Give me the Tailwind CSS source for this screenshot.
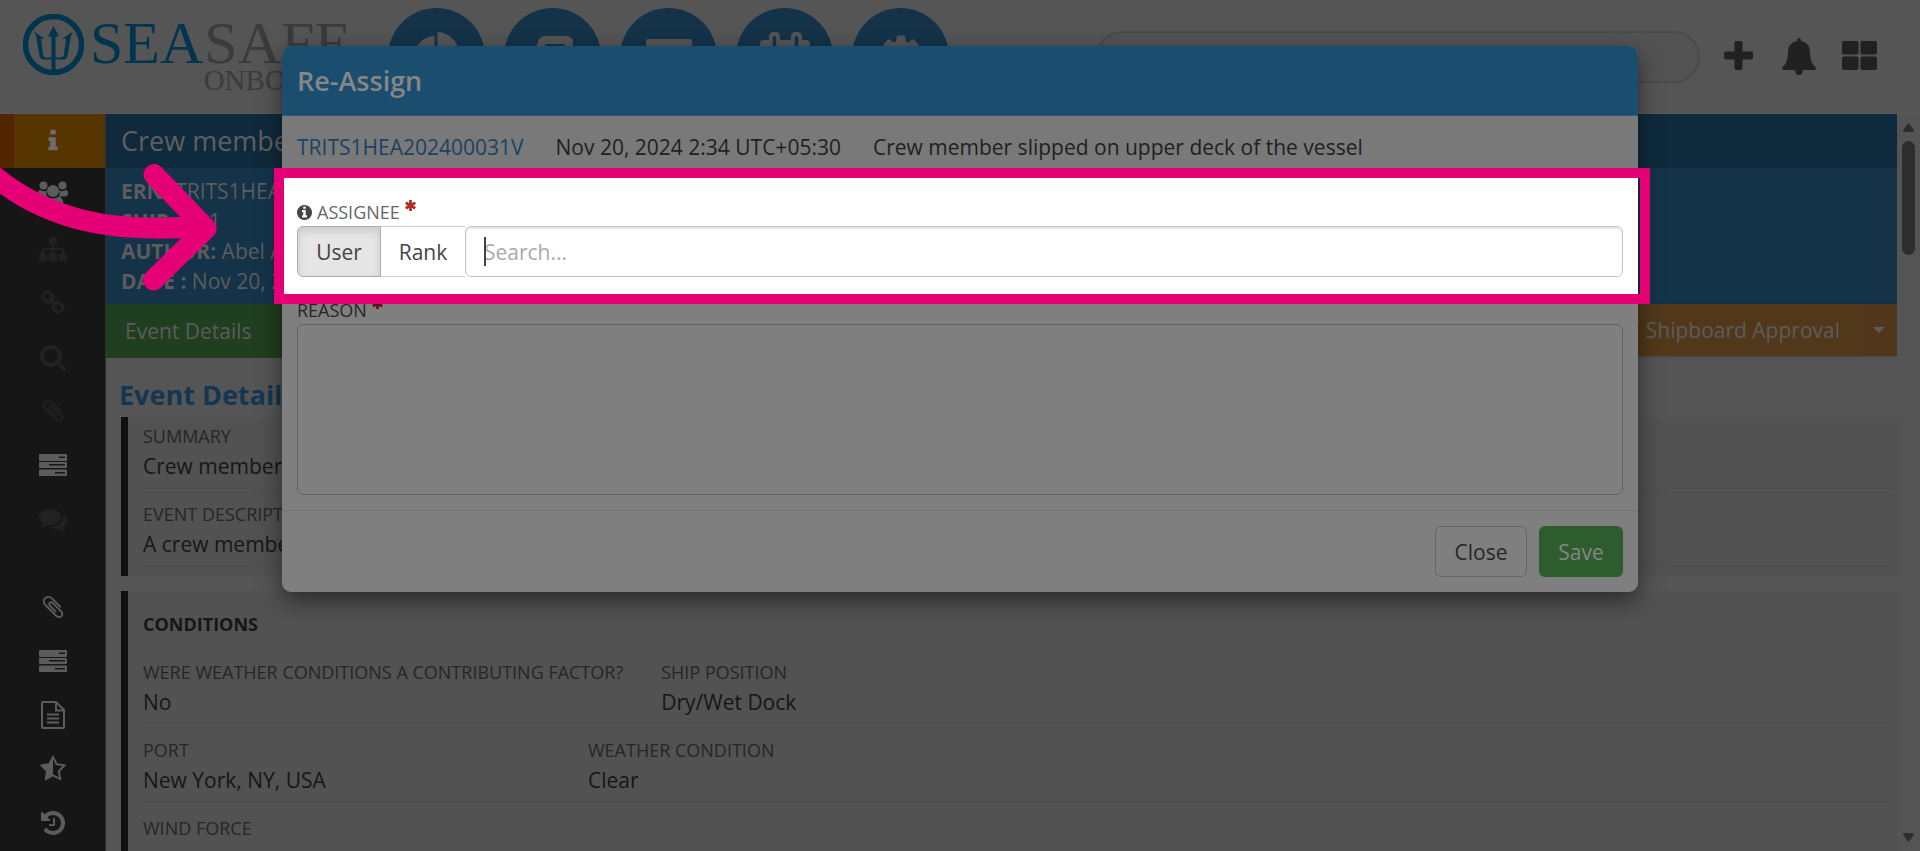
<!DOCTYPE html>
<html lang="en">
<head>
<meta charset="utf-8">
<title>SeaSafe Onboard - Re-Assign</title>
<script src="https://cdn.jsdelivr.net/npm/@tailwindcss/browser@4"></script>
</head>
<body class="relative flex h-screen flex-col overflow-hidden bg-[#555555] font-['Open_Sans',sans-serif] text-[21px] leading-[30px] text-[#161616]">

<svg class="hidden">
  <symbol id="clip" viewBox="0 0 1792 1792"><path d="M1596 1385q0 117-79 196t-196 79q-135 0-235-100l-777-776q-113-115-113-271 0-159 110-270t269-111q158 0 273 113l605 606q10 10 10 22 0 16-30.500 46.500t-46.500 30.500q-13 0-23-10l-606-607q-79-77-181-77-106 0-179 75t-73 181q0 105 76 181l776 777q63 63 145 63 64 0 106-42t42-106q0-82-63-145l-581-581q-26-24-60-24-29 0-48 19t-19 48q0 32 25 59l410 410q10 10 10 22 0 16-31 47t-47 31q-12 0-22-10l-410-410q-63-61-63-149 0-82 57-139t139-57q88 0 149 63l581 581q100 98 100 235z"/></symbol>
  <symbol id="tasks" viewBox="0 0 28 28"><path fill-rule="evenodd" d="M1 3h26a1 1 0 0 1 1 1v5a1 1 0 0 1-1 1H1a1 1 0 0 1-1-1V4a1 1 0 0 1 1-1zM20 5.500v1.500h6V5.500zM1 11h26a1 1 0 0 1 1 1v4a1 1 0 0 1-1 1H1a1 1 0 0 1-1-1v-4a1 1 0 0 1 1-1zM10 13v1.500h16V13zM1 18.500h26a1 1 0 0 1 1 1v4.500a1 1 0 0 1-1 1H1a1 1 0 0 1-1-1v-4.500a1 1 0 0 1 1-1zM16 21v1.500h10V21z"/></symbol>
  <symbol id="star" viewBox="0 0 12 12"><path d="M6 0v12M.8 3l10.400 6M.8 9l10.400-6" fill="none" stroke="currentColor" stroke-width="3"/></symbol>
</svg>

<header class="flex h-[114px] shrink-0 items-start border-b border-[#5b5b5b]">
  <a href="#" aria-label="SeaSafe Onboard" class="ml-[23px] mt-[14px] flex w-[365px] items-start font-['Liberation_Serif',serif]">
    <svg class="size-[61px] shrink-0 text-[#00354d]" viewBox="0 0 61 61" fill="currentColor">
      <circle cx="30.500" cy="30.500" r="28" fill="none" stroke="currentColor" stroke-width="5.500"/>
      <path d="M30.500 12l5.500 10.500h-3.500V43.500h5.500q2.500 0 3-3.500l2-15.500-4 .5 11-7.500-2 4-3.500 20q-.8 4-4 4h-8v11h-4V45.500h-8q-3.200 0-4-4l-3.500-20-2-4 11 7.500-4-.5 2 15.500q.5 3.500 3 3.500h5.500V22.500H25z"/>
    </svg>
    <span class="ml-[6px] mt-[2px] flex flex-col">
      <span class="flex gap-px text-[60px] leading-[55px] text-[#3b3b3b]"><span class="text-[#00354d]">SEA</span><span>SAFE</span></span>
      <span class="self-end pr-1 text-[29px] leading-[18px] text-[#3b3b3b]">ONBOARD</span>
    </span>
  </a>
  <nav class="mt-2 flex gap-[19px] text-[#555555]" aria-label="Main">
    <button aria-label="Dashboard" class="flex size-[97px] items-center justify-center rounded-full bg-[#143349]">
      <svg class="size-[50px]" viewBox="0 0 50 50" fill="currentColor"><path d="M22.500 4v23l16 15A22 22 0 1 1 22.500 4z"/><path d="M25.500 0a23 23 0 0 1 22 23h-22z"/></svg>
    </button>
    <button aria-label="Records" class="flex size-[97px] items-center justify-center rounded-full bg-[#143349]">
      <svg class="size-[50px]" viewBox="0 0 50 50" fill="none" stroke="currentColor" stroke-width="8"><path d="M17 8h21q4 0 3 4l-7 25q-1 4-5 4H9q-4 0-3-4l8-27q1-2 3-2z"/><path d="M46 15q2 1 1 5l-6 20q-1 5-6 5H9" stroke-width="3"/></svg>
    </button>
    <button aria-label="Forms" class="flex size-[97px] items-center justify-center rounded-full bg-[#143349]">
      <svg class="size-[50px]" viewBox="0 0 50 50" fill="currentColor"><path fill-rule="evenodd" d="M4 7h42q2 0 2 2v32q0 2-2 2H4q-2 0-2-2V9q0-2 2-2zM7 18v20h36V18z"/></svg>
    </button>
    <button aria-label="Calendar" class="flex size-[97px] items-center justify-center rounded-full bg-[#143349]">
      <svg class="size-[50px]" viewBox="0 0 50 50" fill="currentColor"><path fill-rule="evenodd" d="M4 8h5V5q0-5 5-5h1q5 0 5 5v3h11V5q0-5 5-5h1q5 0 5 5v3h4q4 0 4 4v34q0 4-4 4H4q-4 0-4-4V12q0-4 4-4zM4 20v26h42V20z"/><path d="M14.500 5.500v10M36.500 5.500v10" stroke="#143349" stroke-width="3.500" stroke-linecap="round"/></svg>
    </button>
    <button aria-label="Settings" class="flex size-[97px] items-center justify-center rounded-full bg-[#143349]">
      <svg class="size-[50px]" viewBox="0 0 1792 1792" fill="currentColor"><path d="M1152 896q0-106-75-181t-181-75-181 75-75 181 75 181 181 75 181-75 75-181zm512-109v222q0 12-8 23t-20 13l-185 28q-19 54-39 91 35 50 107 138 10 12 10 25t-9 23q-27 37-99 108t-94 71q-12 0-26-9l-138-108q-44 23-91 38-16 136-29 186-7 28-36 28h-222q-14 0-24.500-8.500t-11.500-21.500l-28-184q-49-16-90-37l-141 107q-10 9-25 9-14 0-25-11-126-114-165-168-7-10-7-23 0-12 8-23 15-21 51-66.500t54-70.500q-27-50-41-99l-183-27q-13-2-21-12.500t-8-23.500v-222q0-12 8-23t19-13l186-28q14-46 39-92-40-57-107-138-10-12-10-24 0-10 9-23 26-36 98.500-107.500t94.500-71.500q13 0 26 10l138 107q44-23 91-38 16-136 29-186 7-28 36-28h222q14 0 24.500 8.500t11.500 21.500l28 184q49 16 90 37l142-107q9-9 24-9 13 0 25 10 129 119 165 170 7 8 7 22 0 12-8 23-15 21-51 66.500t-54 70.500q26 50 41 98l183 28q13 2 21 12.500t8 23.500z"/></svg>
    </button>
  </nav>
  <input type="search" aria-label="Search records" class="ml-auto mt-[31px] h-[52px] w-[604px] rounded-full border-2 border-[#4b4b4b] bg-[#535353] px-6">
  <div class="ml-6 mr-[43px] mt-[38px] flex h-[37px] text-[#212121]">
    <button aria-label="Add" class="mt-[3px] h-[29px]"><svg class="size-[29px]" viewBox="0 0 29 29" fill="currentColor"><path d="M12.500 0h4q2 0 2 2v8.500H27q2 0 2 2v4q0 2-2 2h-8.500V27q0 2-2 2h-4q-2 0-2-2v-8.500H2q-2 0-2-2v-4q0-2 2-2h8.500V2q0-2 2-2z"/></svg></button>
    <button aria-label="Notifications" class="ml-[29px]"><svg class="h-[37px] w-[34px]" viewBox="0 0 34 37" fill="currentColor"><path d="M17 0q2 0 2 3 8.500 1.500 9 11 .3 9 3 12.500l3 3.500q0 2-2 2H21q-.5 5-4 5t-4-5H2q-2 0-2-2l3-3.500Q5.700 23 6 14q.5-9.500 9-11 0-3 2-3z"/></svg></button>
    <button aria-label="Apps" class="ml-[26px] mt-[3px] h-[29px]"><svg class="h-[29px] w-[35px]" viewBox="0 0 35 29" fill="currentColor"><rect width="16.500" height="13.500" rx="2"/><rect x="18.500" width="16.500" height="13.500" rx="2"/><rect y="15.500" width="16.500" height="13.500" rx="2"/><rect x="18.500" y="15.500" width="16.500" height="13.500" rx="2"/></svg></button>
  </div>
</header>

<div class="flex min-h-0 flex-1">
  <nav aria-label="Sections" class="flex w-[106px] shrink-0 flex-col border-r border-[#2e2e2e] bg-[#161616] text-[#5c5c5c]">
    <a href="#" aria-label="Info" class="flex h-[54px] shrink-0 items-center justify-center border-l-[14px] border-[#522400] bg-[#573500] pr-[14px] text-[#6d6d6d]"><svg class="size-[26px]" viewBox="0 0 1792 1792" fill="currentColor"><path d="M1216 1344v128q0 26-19 45t-45 19h-512q-26 0-45-19t-19-45v-128q0-26 19-45t45-19h64v-384h-64q-26 0-45-19t-19-45v-128q0-26 19-45t45-19h384q26 0 45 19t19 45v576h64q26 0 45 19t19 45zm-128-1152v192q0 26-19 45t-45 19h-256q-26 0-45-19t-19-45v-192q0-26 19-45t45-19h256q26 0 45 19t19 45z"/></svg></a>
    <a href="#" aria-label="People" class="flex h-[54px] shrink-0 items-center justify-center"><svg class="h-7 w-[30px]" viewBox="0 0 30 28" fill="currentColor"><circle cx="5.500" cy="4.500" r="4"/><circle cx="24.500" cy="4.500" r="4"/><path d="M2 9q3.500 2 7 .5-1.500 3 .5 6H3q-3 0-3-3Q0 9 2 9zM28 9q-3.500 2-7 .5 1.500 3-.5 6H27q3 0 3-3Q30 9 28 9z"/><circle cx="15" cy="10" r="6"/><path d="M9 15.500q6 4 12 0 4.500 1 4.500 8.500 0 3-4 3h-13q-4 0-4-3 0-7.500 4.500-8.500z"/></svg></a>
    <a href="#" aria-label="Hierarchy" class="flex h-[54px] shrink-0 items-center justify-center text-[#222222]"><svg class="size-7" viewBox="0 0 1792 1792" fill="currentColor"><path d="M1792 1248v320q0 40-28 68t-68 28h-320q-40 0-68-28t-28-68v-320q0-40 28-68t68-28h96v-192h-512v192h96q40 0 68 28t28 68v320q0 40-28 68t-68 28h-320q-40 0-68-28t-28-68v-320q0-40 28-68t68-28h96v-192h-512v192h96q40 0 68 28t28 68v320q0 40-28 68t-68 28h-320q-40 0-68-28t-28-68v-320q0-40 28-68t68-28h96v-192q0-52 38-90t90-38h512v-192h-96q-40 0-68-28t-28-68v-320q0-40 28-68t68-28h320q40 0 68 28t28 68v320q0 40-28 68t-68 28h-96v192h512q52 0 90 38t38 90v192h96q40 0 68 28t28 68z"/></svg></a>
    <a href="#" aria-label="Links" class="flex h-[54px] shrink-0 items-center justify-center text-[#222222]"><svg class="size-[26px]" viewBox="0 0 1792 1792" fill="currentColor"><path d="M1520 1216q0-40-28-68l-208-208q-28-28-68-28-42 0-72 32 3 3 19 18.500t21.500 21.500 15 19 13 25.500 3.500 27.500q0 40-28 68t-68 28q-15 0-27.500-3.500t-25.500-13-19-15-21.500-21.500-18.500-19q-33 31-33 73 0 40 28 68l206 207q27 27 68 27 40 0 68-26l147-146q28-28 28-67zm-703-705q0-40-28-68l-206-207q-28-28-68-28-39 0-68 27l-147 146q-28 28-28 67 0 40 28 68l208 208q27 27 68 27 42 0 72-31-3-3-19-18.500t-21.500-21.500-15-19-13-25.500-3.500-27.500q0-40 28-68t68-28q15 0 27.500 3.500t25.500 13 19 15 21.500 21.500 18.500 19q33-31 33-73zm895 705q0 120-85 203l-147 146q-83 83-203 83-121 0-204-85l-206-207q-83-83-83-203 0-123 88-209l-88-88q-86 88-208 88-120 0-204-84l-208-208q-84-84-84-204t85-203l147-146q83-83 203-83 121 0 204 85l206 207q83 83 83 203 0 123-88 209l88 88q86-88 208-88 120 0 204 84l208 208q84 84 84 204z"/></svg></a>
    <a href="#" aria-label="Search" class="flex h-[54px] shrink-0 items-center justify-center text-[#222222]"><svg class="size-7" viewBox="0 0 1792 1792" fill="currentColor"><path d="M1216 832q0-185-131.500-316.500t-316.500-131.500-316.500 131.500-131.500 316.500 131.500 316.500 316.500 131.500 316.500-131.500 131.500-316.500zm512 832q0 52-38 90t-90 38q-54 0-90-38l-343-342q-179 124-399 124-143 0-273.500-55.500t-225-150-150-225-55.500-273.500 55.500-273.500 150-225 225-150 273.500-55.500 273.500 55.500 225 150 150 225 55.500 273.500q0 220-124 399l343 343q37 37 37 90z"/></svg></a>
    <a href="#" aria-label="Attachments" class="flex h-[54px] shrink-0 items-center justify-center text-[#222222]"><svg class="size-[26px]" fill="currentColor"><use href="#clip"/></svg></a>
    <a href="#" aria-label="Tasks" class="flex h-[54px] shrink-0 items-center justify-center"><svg class="size-7" fill="currentColor"><use href="#tasks"/></svg></a>
    <a href="#" aria-label="Comments" class="flex h-[54px] shrink-0 items-center justify-center text-[#222222]"><svg class="size-7" viewBox="0 0 1792 1792" fill="currentColor"><path d="M1408 768q0 139-94 257t-256.500 186.500-353.500 68.500q-86 0-176-16-124 88-278 128-36 9-86 16h-3q-11 0-20.500-8t-11.500-21q-1-3-1-6.500t.5-6.500 2-6l2.500-5 3.500-5.500 4-5 4.500-5 4-4.500q5-6 23-25t26-29.500 22.500-29 25-38.500 20.500-44q-124-72-195-177t-71-224q0-139 94-257t256.500-186.500 353.500-68.500 353.500 68.500 256.500 186.500 94 257zm384 256q0 120-71 224.500t-195 176.500q10 24 20.500 44t25 38.500 22.500 29 26 29.500 23 25q1 1 4 4.500t4.500 5 4 5 3.500 5.500l2.500 5 2 6 .5 6.500-1 6.500q-3 14-13 22t-22 7q-50-7-86-16-154-40-278-128-90 16-176 16-271 0-472-132 58 4 88 4 161 0 309-45t264-129q125-92 192-212t67-254q0-77-23-152 129 71 204 178t75 230z"/></svg></a>
    <a href="#" aria-label="Files" class="mt-[34px] flex h-[54px] shrink-0 items-center justify-center"><svg class="size-[26px]" fill="currentColor"><use href="#clip"/></svg></a>
    <a href="#" aria-label="Actions" class="flex h-[54px] shrink-0 items-center justify-center"><svg class="size-7" fill="currentColor"><use href="#tasks"/></svg></a>
    <a href="#" aria-label="Report" class="flex h-[54px] shrink-0 items-center justify-center"><svg class="h-7 w-6" viewBox="0 0 24 28" fill="none" stroke="currentColor" stroke-width="2"><path d="M2 1h13l8 8v17q0 1-1 1H2q-1 0-1-1V2q0-1 1-1zM15 1v8.500h8M6 13.500h12M6 17.500h12M6 21.500h12"/></svg></a>
    <a href="#" aria-label="Rating" class="flex h-[54px] shrink-0 items-center justify-center"><svg class="size-7" viewBox="0 0 1792 1792" fill="currentColor"><path d="M1250 957l257-250-356-52-66-10-30-60-159-322v963l59 31 318 168-60-355-12-66zm452-262l-363 354 86 500q5 33-6 51.500t-34 18.500q-17 0-40-12l-449-236-449 236q-23 12-40 12-23 0-34-18.500t-6-51.500l86-500-364-354q-32-32-23-59.500t54-34.500l502-73 225-455q20-41 49-41 28 0 49 41l225 455 502 73q45 7 54 34.500t-24 59.500z"/></svg></a>
    <a href="#" aria-label="History" class="flex h-[54px] shrink-0 items-center justify-center"><svg class="size-7" viewBox="0 0 1792 1792" fill="currentColor"><path d="M1664 896q0 156-61 298t-164 245-245 164-298 61q-172 0-327-72.500t-264-204.500q-7-10-6.500-22.500t8.500-20.500l137-138q10-9 25-9 16 2 23 12 73 95 179 147t225 52q104 0 198.500-40.500t163.500-109.500 109.500-163.500 40.500-198.500-40.500-198.500-109.500-163.500-163.500-109.500-198.500-40.500q-98 0-188 35.500t-160 101.500l137 138q31 30 14 69-17 40-59 40h-448q-26 0-45-19t-19-45v-448q0-42 40-59 39-17 69 14l130 129q107-101 244.500-156.500t284.500-55.500 298 61 245 164 164 245 61 298zm-640-288v448q0 14-9 23t-23 9h-320q-14 0-23-9t-9-23v-64q0-14 9-23t23-9h224v-352q0-14 9-23t23-9h64q14 0 23 9t9 23z"/></svg></a>
  </nav>

  <main class="flex min-w-0 flex-1 flex-col overflow-hidden">
    <h1 class="h-[54px] shrink-0 bg-[#0f2a3c] px-[15px] text-[27px] leading-[53px] text-[#5f5f5f]">Crew member slipped on upper deck of the vessel</h1>
    <div class="flex h-[136px] shrink-0 flex-col bg-[#143349] px-[15px] pt-2 text-[#5c5c5c]">
      <p><b>ERN:</b> TRITS1HEA202400031V</p>
      <p><b>SHIP:</b> TS 1</p>
      <p><b>AUTHOR:</b> Abel A</p>
      <p><b>DATE :</b> Nov 20, 2024</p>
    </div>
    <div class="flex shrink-0 items-start justify-between text-[#5c5c5c]">
      <button class="h-[54px] w-[190px] bg-[#203e20] pl-[19px] text-left">Event Details</button>
      <div class="flex h-[52px] bg-[#51381a] shadow">
        <button class="flex items-center gap-[6px] px-5"><svg class="size-5" viewBox="0 0 20 20" fill="none" stroke="currentColor" stroke-width="3"><path d="M2 11l6 6L18 0"/></svg>Shipboard Approval</button>
        <button aria-label="More approval actions" class="flex w-[37px] items-center justify-center bg-[#50361a]"><svg class="h-[6px] w-3" viewBox="0 0 12 6" fill="currentColor"><path d="M0 0h12L6 6z"/></svg></button>
      </div>
    </div>
    <h2 class="mt-[18px] pb-1 pl-[13px] text-[27px] leading-[37px] font-bold text-[#143651]">Event Details</h2>
    <section class="ml-[15px] shrink-0 border-l-[7px] border-[#101010] bg-[#525252] pb-[9px] pl-[15px] pr-1">
      <div class="border-b border-[#4d4d4d] pt-[7px] pb-[5px]"><h3 class="text-[18px] leading-6 text-[#262626]">SUMMARY</h3><p class="pt-px leading-[34px]">Crew member slipped on upper deck of the vessel</p></div>
      <div class="border-b border-[#4d4d4d] pt-[13px] pb-[5px]"><h3 class="text-[18px] leading-6 text-[#262626]">EVENT DESCRIPTION</h3><p class="pt-px leading-[34px]">A crew member slipped on upper deck</p></div>
    </section>
    <section class="mt-[15px] ml-[15px] shrink-0 border-l-[7px] border-[#101010] bg-[#525252] pl-[15px] pr-1">
      <h3 class="border-b border-[#4d4d4d] pt-[21px] pb-[9px] text-[18px] leading-6 font-bold">CONDITIONS</h3>
      <div class="flex border-b border-[#4d4d4d] pt-[14px] pb-1">
        <div class="min-w-[445px] pr-[38px]"><h4 class="text-[18px] leading-6 text-[#262626]">WERE WEATHER CONDITIONS A CONTRIBUTING FACTOR?</h4><p class="pt-px leading-[34px]">No</p></div>
        <div><h4 class="text-[18px] leading-6 text-[#262626]">SHIP POSITION</h4><p class="pt-px leading-[34px]">Dry/Wet Dock</p></div>
      </div>
      <div class="flex border-b border-[#4d4d4d] pt-[14px] pb-1">
        <div class="min-w-[445px] pr-[38px]"><h4 class="text-[18px] leading-6 text-[#262626]">PORT</h4><p class="pt-px leading-[34px]">New York, NY, USA</p></div>
        <div><h4 class="text-[18px] leading-6 text-[#262626]">WEATHER CONDITION</h4><p class="pt-px leading-[34px]">Clear</p></div>
      </div>
      <div class="h-[78px] pt-[14px]"><h4 class="text-[18px] leading-6 text-[#262626]">WIND FORCE</h4></div>
    </section>
  </main>

  <div class="flex w-[23px] shrink-0 flex-col items-center bg-[#545454] pt-[9px] pb-[9px]" aria-hidden="true">
    <svg class="h-[9px] w-[11px] shrink-0" viewBox="0 0 11 9" fill="#2d2d2d"><path d="M4.500 1q1-1.500 2 0L11 7.500Q11 9 10 9H1Q0 9 0 7.500z"/></svg>
    <div class="mt-[9px] h-[114px] w-[13px] shrink-0 rounded-full bg-[#2d2d2d]"></div>
    <svg class="mt-auto h-[9px] w-[11px] shrink-0" viewBox="0 0 11 9" fill="#2d2d2d"><path d="M4.500 8q1 1.500 2 0L11 1.500Q11 0 10 0H1Q0 0 0 1.500z"/></svg>
  </div>
</div>

<div class="absolute inset-x-0 top-[46px] flex justify-center px-4">
  <div role="dialog" aria-labelledby="dlg-title" class="w-full max-w-[1356px] rounded-[9px] bg-[#7f7f7f] shadow-[0_8px_23px_rgba(0,0,0,0.5)]">
    <h2 id="dlg-title" class="h-[70px] rounded-t-[9px] border-b border-[#255a7d] bg-[#1b4d6f] px-[15px] text-[27px] leading-[69px] font-semibold text-[#868686]">Re-Assign</h2>
    <div class="flex h-[62px] gap-8 bg-[#797979] px-[15px] pt-4 text-[#1f1f1f]">
      <a href="#" class="text-[#1c4263]">TRITS1HEA202400031V</a><span>Nov 20, 2024 2:34 UTC+05:30</span><span>Crew member slipped on upper deck of the vessel</span>
    </div>
    <div class="relative h-[116px] bg-white px-[15px] pt-5 text-[#444444]">
      <label for="assignee" class="flex h-7 items-start text-[18px] leading-7 text-[#666666]">
        <svg class="mt-[7px] mr-[5px] size-[15px] text-[#444444]" viewBox="128 128 1536 1536" fill="currentColor"><path d="M1152 1376v-160q0-14-9-23t-23-9h-96v-512q0-14-9-23t-23-9h-320q-14 0-23 9t-9 23v160q0 14 9 23t23 9h96v320h-96q-14 0-23 9t-9 23v160q0 14 9 23t23 9h448q14 0 23-9t9-23zm-128-896v-160q0-14-9-23t-23-9h-192q-14 0-23 9t-9 23v160q0 14 9 23t23 9h192q14 0 23-9t9-23zm640 416q0 209-103 385.500t-279.500 279.500-385.500 103-385.500-103-279.500-279.500-103-385.500 103-385.500 279.500-279.500 385.500-103 385.500 103 279.500 279.500 103 385.500z"/></svg>ASSIGNEE
        <svg class="mt-[2px] ml-[5px] size-[11px] text-[#b52b27]"><use href="#star"/></svg>
      </label>
      <div class="flex h-[51px]">
        <button aria-pressed="true" class="w-[84px] rounded-l-md border border-[#adadad] bg-[#e6e6e6] shadow-[inset_0_4px_8px_rgba(0,0,0,0.13)]">User</button>
        <button aria-pressed="false" class="w-[84px] border-y border-[#cccccc] bg-white">Rank</button>
        <div class="relative flex-1">
          <input id="assignee" type="text" placeholder="Search..." class="h-full w-full rounded-md border border-[#b8c6d4] bg-white px-[18px] shadow-[inset_0_2px_2px_rgba(0,0,0,0.1)] placeholder:text-[#aaaaaa]">
          <span class="absolute top-[11px] left-[19px] h-[29px] w-[2px] bg-[#444444]"></span>
        </div>
      </div>
      <div class="pointer-events-none absolute -inset-y-[10px] -left-2 -right-3 z-10 border-[10px] border-[#e50076]"></div>
    </div>
    <form class="px-[15px] pt-[2px]">
      <label for="reason" class="flex h-7 items-start text-[18px] leading-7 text-[#262626]">REASON
        <svg class="mt-[2px] ml-[5px] size-[11px] text-[#5a1513]"><use href="#star"/></svg>
      </label>
      <textarea id="reason" class="block h-[171px] w-full resize-none rounded-md border border-[#636363] bg-[#7f7f7f] p-3"></textarea>
    </form>
    <div class="mt-[15px] flex justify-end gap-3 border-t border-[#727272] px-[15px] py-[15px]">
      <button class="h-[51px] w-[92px] rounded-md border border-[#656565] text-[#262626]">Close</button>
      <button class="h-[51px] w-[84px] rounded-md bg-[#2e5c2e] text-[#868686]">Save</button>
    </div>
  </div>
</div>

<svg class="pointer-events-none absolute top-[150px] left-0 h-[150px] w-[230px]" viewBox="0 150 230 150" fill="none" stroke="#e50076" stroke-width="21" stroke-linecap="round" stroke-linejoin="round" aria-hidden="true">
  <path d="M-14 169C44 222 116 234 204 226M154 174.500L206 228.500L153.500 280"/>
</svg>
</body>
</html>
